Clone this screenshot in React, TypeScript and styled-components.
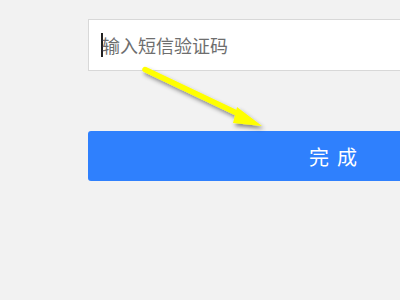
import React from "react"
import styled, { createGlobalStyle } from "styled-components"

const GlobalStyle = createGlobalStyle`
  html, body {
    margin: 0;
    padding: 0;
    background: #f2f2f2;
    overflow: hidden;
  }
  body {
    font-family: "Noto Sans CJK SC", "Noto Sans", sans-serif;
  }
`

const Page = styled.div`
  position: relative;
  width: 400px;
  height: 300px;
  overflow: hidden;
  padding: 19px 0 0 88px;
  box-sizing: border-box;
`

const Form = styled.div`
  display: flex;
  flex-direction: column;
  width: 490px;
`

const Field = styled.div`
  display: flex;
  align-items: center;
  height: 52px;
  box-sizing: border-box;
  border: 1px solid #d8d8d8;
  background: #ffffff;
  padding-left: 12px;
`

const Caret = styled.span`
  display: inline-block;
  width: 2px;
  height: 24px;
  background: #222;
  margin-right: -1px;
`

const Placeholder = styled.span`
  font-size: 18px;
  color: #6e6e6e;
  line-height: 1;
`

const SubmitButton = styled.button`
  margin-top: 60px;
  height: 50px;
  border: none;
  border-radius: 3px;
  background: #2f80fd;
  color: #ffffff;
  font-family: inherit;
  font-size: 20px;
  letter-spacing: 8px;
  text-indent: 8px;
  cursor: pointer;
`

const Annotation = styled.svg`
  position: absolute;
  left: 0;
  top: 0;
  pointer-events: none;
`

function Arrow() {
  return (
    <Annotation width="400" height="300" viewBox="0 0 400 300">
      <defs>
        <filter id="shadow" x="-20%" y="-20%" width="140%" height="140%">
          <feDropShadow dx="2" dy="3" stdDeviation="2" floodColor="#000" floodOpacity="0.45" />
        </filter>
      </defs>
      <g filter="url(#shadow)">
        <line x1="145" y1="69.5" x2="243" y2="116" stroke="#ffff00" strokeWidth="5.5" strokeLinecap="round" />
        <polygon points="262,126 237,107 233,123" fill="#ffff00" />
      </g>
    </Annotation>
  )
}

export default function App() {
  return (
    <Page>
      <GlobalStyle />
      <Form>
        <Field>
          <Caret />
          <Placeholder>输入短信验证码</Placeholder>
        </Field>
        <SubmitButton>完成</SubmitButton>
      </Form>
      <Arrow />
    </Page>
  )
}
